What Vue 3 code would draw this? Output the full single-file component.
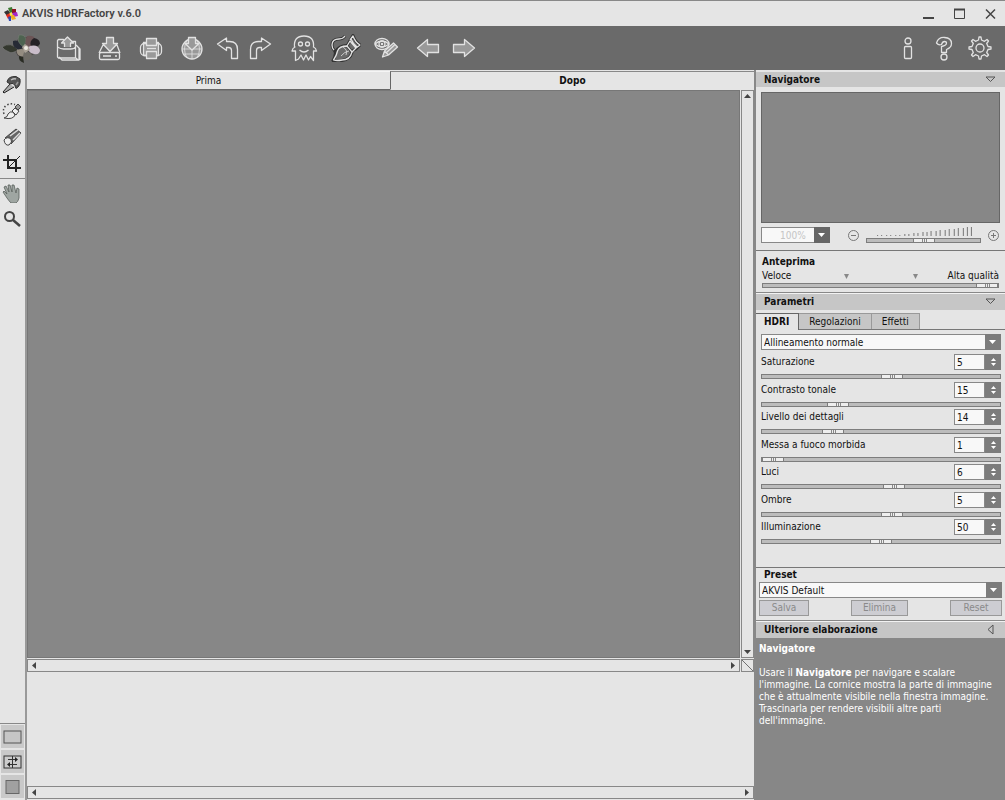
<script setup>
import { ref, reactive } from "vue";

const activeView = ref("Dopo");
const activeTab = ref("HDRI");
const zoom = ref("100%");
const zoomLevel = ref(50);
const quality = ref(100);
const alignment = ref("Allineamento normale");
const preset = ref("AKVIS Default");

const tabs = ["HDRI", "Regolazioni", "Effetti"];

const params = reactive([
  { id: "saturation", label: "Saturazione", value: 5, min: -50, max: 50 },
  { id: "contrast", label: "Contrasto tonale", value: 15, min: 0, max: 50 },
  { id: "details", label: "Livello dei dettagli", value: 14, min: 0, max: 50 },
  { id: "soft", label: "Messa a fuoco morbida", value: 1, min: 1, max: 20 },
  { id: "lights", label: "Luci", value: 6, min: -50, max: 50 },
  { id: "shadows", label: "Ombre", value: 5, min: -50, max: 50 },
  { id: "lighting", label: "Illuminazione", value: 50, min: 0, max: 100 },
]);

// growing marks above the zoom slider
const marks = Array.from({ length: 22 }, (_, i) => ({
  x: 1 + Math.round(i * 4.45),
  h: i < 5 ? 1 : Math.round(1 + (i - 4) * 0.48),
}));

function step(param, by) {
  const next = Number(param.value) + by;
  param.value = Math.min(param.max, Math.max(param.min, next));
}
</script>

<template>
  <div class="app">
    <header class="titlebar">
      <svg class="app-icon" width="14" height="14" viewBox="0 0 14 14">
        <path d="M0 5l4-2 3 4-4 2z" fill="#333" />
        <path d="M4 1l4-1 1 5-3 1z" fill="#3d7a32" />
        <path d="M8 2l4 0 0 4-4 1z" fill="#8c1420" />
        <path d="M8 6l5-1 1 4-5 1z" fill="#a326c9" />
        <path d="M2 8l4-2 1 4-3 2z" fill="#e52d20" />
        <path d="M6 8l4 0 2 4-4 1z" fill="#f0ae24" />
        <path d="M4 10l3-1 0 5-2 0z" fill="#304bb5" />
        <circle cx="7" cy="7" r="1.5" fill="#f6e94b" />
      </svg>
      <h1>AKVIS HDRFactory v.6.0</h1>
      <div class="window-buttons">
        <button aria-label="Riduci">
          <svg width="13" height="12"><path d="M1 10h11" stroke="#444" stroke-width="2" /></svg>
        </button>
        <button aria-label="Ingrandisci">
          <svg width="13" height="12"><path d="M1.500 1.500h10v9h-10z" fill="none" stroke="#444" /><path d="M1 1.500h11" stroke="#444" stroke-width="2" /></svg>
        </button>
        <button aria-label="Chiudi">
          <svg width="13" height="12"><path d="M2 1.500l9 9M11 1.500l-9 9" stroke="#444" stroke-width="1.500" /></svg>
        </button>
      </div>
    </header>

    <div class="toolbar">
      <svg class="logo" width="40" height="32" viewBox="0 0 40 32">
        <path d="M10 14l8-9 12 0 7 8-5 9-8 5-8-3z" fill="#4c4847" />
        <path d="M0 15q9-6 16 3q-6 4-9 2q-5-2-7-5z" fill="#34382f" stroke="#808080" stroke-width=".6" />
        <path d="M11 9q6-2 10 6l-3 3q-8-2-7-9z" fill="#262a35" />
        <path d="M17 3q7-1 7 6l-2 6q-8-4-5-12z" fill="#4e6350" stroke="#7b8478" stroke-width=".5" />
        <path d="M25 4q8-1 8 4q-2 7-8 8q-3-6 0-12z" fill="#6b5455" />
        <path d="M32 6q6 1 6 6q-4 5-9 2q-2-5 3-8z" fill="#252126" />
        <path d="M26 15q9-4 12 3q0 5-6 4q-6-1-6-7z" fill="#c9bcc9" />
        <path d="M15 18q7-3 9 2q-1 6-6 4q-4-2-3-6z" fill="#948c80" />
        <path d="M23 19q7 1 7 5q-2 5-7 4q-4-4 0-9z" fill="#6f6c66" />
        <path d="M17 24l4 1 1 6q-6-2-5-7z" fill="#292b23" />
        <path d="M20 15l3-3 3 2 2 4-5 3z" fill="#a9a196" />
        <circle cx="24" cy="16" r="2" fill="#eeeae1" />
      </svg>

      <div class="group">
        <button aria-label="Apri">
          <svg class="icon" viewBox="0 0 32 28">
            <path d="M23 11l3 3v12H9l-3-3M24 12l3 3v11M25 26l-2-2" />
            <path d="M4.500 14V6.500l1-1h5l1 2h11v16.500h-17l-1-1zM4.500 13q3 2 6 2h7q4 0 5-2" />
            <path class="fill" d="M11.500 13V9h-3l6-6 6 6h-3v4" />
          </svg>
        </button>
        <button aria-label="Salva">
          <svg class="icon" viewBox="0 0 32 28">
            <path d="M9 11l-4 8M23 11l3 8M9 11h3M20 11h3" />
            <rect x="5.500" y="18.500" width="20" height="7" rx="1.500" />
            <path class="fill" d="M12.500 3.500h7v6h4l-7.500 8-7.500-8h4z" />
            <path d="M9 22h8M21 22h2" />
          </svg>
        </button>
        <button aria-label="Stampa">
          <svg class="icon" viewBox="0 0 32 28">
            <rect class="fill" x="8.500" y="8.500" width="15" height="13" />
            <rect x="5.500" y="9.500" width="21" height="12" rx="4" />
            <rect class="fill" x="11.500" y="4.500" width="10" height="7" />
            <rect class="fill" x="11.500" y="17.500" width="10" height="7" />
            <path d="M12 14.500h9" />
          </svg>
        </button>
        <button aria-label="Pubblica">
          <svg class="icon" viewBox="0 0 32 28">
            <circle class="fill" cx="16" cy="15" r="10" />
            <path d="M6 15h20M8 20h16M16 5v20M11 6q-5 9 0 18M21 6q5 9 0 18" stroke-width=".8" />
            <path class="fill" d="M12.500 3.500h7v6h3.500l-7 6.500-7-6.500h3.500z" />
          </svg>
        </button>
        <button class="narrow" aria-label="Annulla">
          <svg class="icon" viewBox="0 0 32 28">
            <path d="M4.500 10l9-6v3.500h3q8 0 8 8v9h-6v-8q0-3-3-3h-2v3z" />
          </svg>
        </button>
        <button class="narrow" aria-label="Ripeti">
          <svg class="icon" viewBox="0 0 32 28">
            <path d="M24.500 10l-9-6v3.500h-3q-8 0-8 8v9h6v-8q0-3 3-3h2v3z" />
          </svg>
        </button>
      </div>

      <div class="group">
        <button aria-label="Fantasmi">
          <svg class="icon" viewBox="0 0 32 28">
            <path d="M6.500 13q-1-11 9.500-11t9.500 11q2.500 1 3 4h-3v9.500l-3-4-2 3.500-2.500-5-2.500 5-2.500-5-2.500 4-3 1.500V17h-3.500q.5-3 3-4z" />
            <circle cx="12.500" cy="10" r="2" />
            <circle cx="19.500" cy="10" r="2" />
            <path d="M11.500 16q4.500 4 9 0" />
          </svg>
        </button>
        <button aria-label="Pennello">
          <svg class="icon" viewBox="0 0 32 28">
            <g class="shade">
              <path d="M16 2q-2 3-6 3-7 0-7 6 0 3 2 5t1 5q0 3-2 5.500 4 1 9 0 8-1 10-8l-5-7q-8 0-11 6" />
              <path d="M18 12l4-7 2-3.500q2 6 7 9.500l-4 4-4 2" />
            </g>
            <path d="M16 2q-2 3-6 3-7 0-7 6 0 3 2 5" />
            <path d="M4.500 26q3-4 4-9 2-5 9.500-5l5 6q-2 8-10 8-5 1-8.500 0z" />
            <path d="M18 12l3-5 6 7-4 4M21 6l3-4q2 6 7 9l-4 3M22 5q2 5 6 8" />
            <path d="M14 13q5 3 3 8M20 17q-5 1-8 5" stroke-width=".8" />
          </svg>
        </button>
        <button aria-label="Modifica selezione">
          <svg class="icon" viewBox="0 0 32 28">
            <ellipse cx="12" cy="10" rx="7" ry="5.500" />
            <path d="M5 10q7-6 14 0-7 6-14 0z" />
            <circle cx="12" cy="10" r="3" />
            <circle cx="12" cy="10" r=".6" />
            <path class="fill" d="M12.500 23l2-6 9-8 4 4-9 8zM14.500 17l4 4M16.500 18.500l8-7.500" />
          </svg>
        </button>
      </div>

      <div class="group arrows">
        <button class="narrow" aria-label="Indietro">
          <svg class="icon" viewBox="0 0 32 28">
            <path class="fill" d="M5.500 14l10-8.500v5h11v8h-11v4z" />
          </svg>
        </button>
        <button class="narrow" aria-label="Avanti">
          <svg class="icon" viewBox="0 0 32 28">
            <path class="fill" d="M27.500 14l-10-8.500v5h-11v8h11v4z" />
          </svg>
        </button>
      </div>

      <div class="group help-group">
        <button aria-label="Informazioni">
          <svg class="icon" viewBox="0 0 32 28">
            <circle cx="16" cy="7" r="3" />
            <rect x="12.500" y="12.500" width="7" height="12" rx="1" />
          </svg>
        </button>
        <button aria-label="Aiuto">
          <svg class="icon" viewBox="0 0 32 28">
            <path d="M8.500 9q2-6 8-5.500 7 .5 7 6 0 4-5 6v3h-5v-6q5-1 5-3.500 0-1.500-2-1.500t-3 3q-3 1-5-1.500z" />
            <circle cx="16" cy="23" r="3" />
          </svg>
        </button>
        <button aria-label="Impostazioni">
          <svg class="icon" viewBox="0 0 32 28">
            <path d="M14.500 6l.5-3h2l.5 3 3 1.300L23 5.500 24.500 7l-1.800 2.500L24 12.500l3 .5v2l-3 .5-1.300 3 1.800 2.500-1.500 1.500-2.500-1.800-3 1.300-.5 3h-2l-.5-3-3-1.300L9 22.500 7.500 21l1.800-2.500-1.300-3-3-.5v-2l3-.5 1.300-3L7.500 7 9 5.500l2.500 1.800z" />
            <circle cx="16" cy="14" r="4" />
          </svg>
        </button>
      </div>
    </div>

    <div class="workspace">
      <aside class="tools">
        <button aria-label="Affina">
          <svg width="20" height="20" viewBox="0 0 20 20">
            <path d="M8 9l-7 8 1 1 10-6" fill="#aaa" stroke="#222" />
            <path d="M5 7q1-6 9-5.500l4 2.500q1 7-4 9.500-1-4-3-5-3 1.500-6-1.500z" fill="#555" stroke="#333" />
            <path d="M9 5q3-2 5-1" stroke="#bbb" stroke-width="1.500" fill="none" />
            <path d="M14 10l2-3" stroke="#999" stroke-width="1.500" />
          </svg>
        </button>
        <button aria-label="Selezione rapida">
          <svg width="20" height="20" viewBox="0 0 20 20" fill="none" stroke="#444">
            <path d="M2 13q-2-6 3-9 4-2 8-.5" stroke-width="1.500" stroke-dasharray="1.500 2" />
            <path d="M2 17q4-1 4-4 2-3 5-2l2 3q-2 5-11 3z" fill="#eee" />
            <path d="M10 10l3-3 4 3-3 4z" fill="#eee" />
            <path d="M13 6l3-3 3 3-3 3z" fill="#999" />
          </svg>
        </button>
        <button aria-label="Gomma">
          <svg width="20" height="20" viewBox="0 0 20 20" stroke="#444">
            <path d="M3 11L14 2l5 4L9 17z" fill="#666" />
            <path d="M8 9l8-6M11 13l7-7" stroke="#ddd" stroke-width="1.500" />
            <path d="M2 13q3-4 7-1 2 3-2 6-4 1-5-5z" fill="#eee" />
          </svg>
        </button>
        <button aria-label="Taglierina">
          <svg width="20" height="20" viewBox="0 0 20 20" fill="none" stroke="#222">
            <path d="M6 2v13h13M1 7h13v12" stroke-width="2" />
            <path d="M6 15L18 3" />
          </svg>
        </button>
        <hr />
        <button aria-label="Mano">
          <svg width="20" height="20" viewBox="0 0 20 20">
            <path d="M5 15L1 9l1-1 3 3-3-7 2-1 3 6-1-7h2l2 7 0-7 2 0 2 8 1-5 2 1v9q-1 4-3 5H9q-2-2-4-5z" fill="#9fa6a2" stroke="#59605c" stroke-width=".8" />
          </svg>
        </button>
        <button aria-label="Zoom">
          <svg width="20" height="20" viewBox="0 0 20 20" fill="none" stroke="#444">
            <circle cx="7.500" cy="7.500" r="4.500" stroke-width="2" />
            <path d="M11 11l7 6" stroke-width="2.500" />
          </svg>
        </button>

        <div class="screen-modes">
          <button aria-label="Vista singola">
            <svg width="19" height="14"><rect x="1" y="1" width="17" height="12" fill="#c6c6c6" stroke="#555" /></svg>
          </button>
          <button aria-label="Vista doppia">
            <svg width="19" height="14" fill="none" stroke="#333">
              <rect x="1" y="1" width="17" height="12" fill="#ccc" />
              <path d="M9.500 1v12M5 4.500h9M5 9.500h9" />
              <path d="M12 2l3 2.500-3 2.500zM7 7l-3 2.500 3 2.500z" fill="#222" stroke="none" />
            </svg>
          </button>
          <button aria-label="Colore di sfondo">
            <svg width="19" height="14"><rect x="3" y="0.500" width="13" height="13" fill="#a0a0a0" stroke="#666" /></svg>
          </button>
        </div>
      </aside>

      <main class="stage">
        <div class="view-tabs">
          <button :class="{ active: activeView === 'Prima' }" @click="activeView = 'Prima'">Prima</button>
          <button :class="{ active: activeView === 'Dopo' }" @click="activeView = 'Dopo'">Dopo</button>
        </div>
        <div class="canvas-area">
          <div class="canvas"></div>
          <div class="scroll vertical">
            <button aria-label="Su"><svg width="7" height="4"><path d="M0 4l3.500-4L7 4z" /></svg></button>
            <button aria-label="Giù"><svg width="7" height="4"><path d="M0 0h7L3.500 4z" /></svg></button>
          </div>
          <div class="scroll">
            <button aria-label="Sinistra"><svg width="4" height="7"><path d="M4 0v7L0 3.500z" /></svg></button>
            <button aria-label="Destra"><svg width="4" height="7"><path d="M0 0v7l4-3.500z" /></svg></button>
          </div>
          <svg class="corner" viewBox="0 0 12 12"><path d="M0 0l12 12" stroke="#666" /></svg>
        </div>
        <div class="strip"></div>
        <div class="scroll bottom-scroll">
          <button aria-label="Sinistra"><svg width="4" height="7"><path d="M4 0v7L0 3.500z" /></svg></button>
          <button aria-label="Destra"><svg width="4" height="7"><path d="M0 0v7l4-3.500z" /></svg></button>
        </div>
      </main>

      <aside class="panel">
        <h2>
          Navigatore
          <svg width="11" height="7"><path d="M1 1h9L5.500 5.500z" fill="none" stroke="#555" /></svg>
        </h2>
        <section class="navigator">
          <div class="preview"></div>
          <div class="zoom-row">
            <div class="select zoom-select">
              <select v-model="zoom" aria-label="Zoom" disabled>
                <option>100%</option>
              </select>
              <svg width="7" height="4"><path d="M0 0h7L3.500 4z" /></svg>
            </div>
            <button class="round" aria-label="Riduci zoom">
              <svg width="13" height="13" fill="none" stroke="#777"><circle cx="6.500" cy="6.500" r="5" /><path d="M4 6.500h5" /></svg>
            </button>
            <div class="zoom-slider">
              <svg width="100%" height="11" viewBox="0 0 114 11" preserveAspectRatio="none">
                <path v-for="m in marks" :key="m.x" :d="`M${m.x + 10.5} 9v-${m.h}`" stroke="#777" />
              </svg>
              <input v-model="zoomLevel" type="range" aria-label="Livello di zoom" />
            </div>
            <button class="round" aria-label="Aumenta zoom">
              <svg width="13" height="13" fill="none" stroke="#777"><circle cx="6.500" cy="6.500" r="5" /><path d="M4 6.500h5M6.500 4v5" /></svg>
            </button>
          </div>
        </section>

        <section class="quality">
          <h3><label for="quality">Anteprima</label></h3>
          <div class="quality-labels">
            <span>Veloce</span>
            <svg width="5" height="5"><path d="M0 0h5L2.500 5z" fill="#888" /></svg>
            <svg width="5" height="5"><path d="M0 0h5L2.500 5z" fill="#888" /></svg>
            <span>Alta qualità</span>
          </div>
          <input id="quality" v-model="quality" type="range" />
        </section>

        <h2 class="ruled">
          Parametri
          <svg width="11" height="7"><path d="M1 1h9L5.500 5.500z" fill="none" stroke="#555" /></svg>
        </h2>
        <div class="tabs">
          <button v-for="tab in tabs" :key="tab" :class="{ active: activeTab === tab }" @click="activeTab = tab">
            {{ tab }}
          </button>
        </div>
        <section class="settings">
          <div class="select">
            <select v-model="alignment" aria-label="Allineamento">
              <option>Allineamento normale</option>
            </select>
            <svg width="7" height="4"><path d="M0 0h7L3.500 4z" /></svg>
          </div>
          <div class="params">
            <div v-for="p in params" :key="p.id" class="param">
              <div class="param-head">
                <label :for="p.id">{{ p.label }}</label>
                <input :id="p.id" v-model="p.value" class="number" type="text" />
                <div class="spin">
                  <button :aria-label="`Aumenta ${p.label}`" @click="step(p, 1)">
                    <svg width="5" height="3"><path d="M0 3l2.500-3L5 3z" /></svg>
                  </button>
                  <button :aria-label="`Diminuisci ${p.label}`" @click="step(p, -1)">
                    <svg width="5" height="3"><path d="M0 0h5L2.500 3z" /></svg>
                  </button>
                </div>
              </div>
              <input v-model.number="p.value" type="range" :min="p.min" :max="p.max" :aria-label="p.label" />
            </div>
          </div>
        </section>

        <section class="preset">
          <h3><label for="preset">Preset</label></h3>
          <div class="select">
            <select id="preset" v-model="preset">
              <option>AKVIS Default</option>
            </select>
            <svg width="7" height="4"><path d="M0 0h7L3.500 4z" /></svg>
          </div>
          <div class="preset-buttons">
            <button disabled>Salva</button>
            <button class="delete" disabled>Elimina</button>
            <button class="reset" disabled>Reset</button>
          </div>
        </section>

        <h2 class="ruled">
          Ulteriore elaborazione
          <svg width="11" height="11"><path d="M8 1v9L3 5.500z" fill="none" stroke="#555" /></svg>
        </h2>
        <section class="hint">
          <h3>Navigatore</h3>
          <p>
            Usare il <b>Navigatore</b> per navigare e scalare l'immagine. La cornice mostra la parte di
            immagine che è attualmente visibile nella finestra immagine. Trascinarla per rendere visibili
            altre parti dell'immagine.
          </p>
        </section>
      </aside>
    </div>
  </div>
</template>

<style>
body {
  margin: 0;
}
</style>

<style scoped>
* {
  box-sizing: border-box;
}

.app {
  display: flex;
  flex-direction: column;
  min-height: 100vh;
  background: #e5e5e5;
  color: #111;
  font: 10px/14px "DejaVu Sans Condensed", "DejaVu Sans", sans-serif;
}

button,
select,
input {
  margin: 0;
  padding: 0;
  border: 0;
  border-radius: 0;
  background: none;
  color: inherit;
  font: inherit;
}

svg {
  display: block;
}

h1,
h2,
h3,
p {
  margin: 0;
  font-size: 10px;
}

h2,
h3,
b,
.active {
  font-weight: 700;
}

.titlebar {
  display: flex;
  align-items: center;
  height: 26px;
  padding: 0 8px 0 4px;
  border-top: 1px solid #888;
}

h1 {
  margin-left: 4px;
  color: #444;
  font: 600 11px/14px Roboto, "Noto Sans", sans-serif;
}

.window-buttons {
  display: flex;
  gap: 18px;
  margin-left: auto;
}

.toolbar {
  display: flex;
  align-items: center;
  height: 44px;
  padding: 0 7px 0 2px;
  background: #6a6a6a;
}

.logo {
  margin-right: 6px;
}

.group {
  display: flex;
  margin-right: 5px;
}

.group button {
  display: flex;
  justify-content: center;
  width: 41px;
}

.group .narrow {
  width: 33px;
}

.arrows {
  gap: 2px;
}

.help-group {
  margin: 0 0 0 auto;
}

.help-group button {
  width: 36px;
}

.icon {
  width: 32px;
  height: 28px;
  flex: none;
  fill: none;
  stroke: #e2e2e2;
  stroke-width: 1.3;
  stroke-linejoin: round;
}

.icon .fill {
  fill: #999;
}

.icon .shade {
  stroke: #333;
  stroke-width: 3;
}

.workspace {
  display: flex;
  flex: 1;
}

.tools {
  display: flex;
  flex-direction: column;
  width: 27px;
  padding-top: 2px;
  border-right: 2px solid #999;
}

.tools > button {
  display: grid;
  place-items: center;
  width: 24px;
  height: 26px;
}

hr {
  width: 100%;
  margin: 2px 0 1px;
  border: 0;
  border-top: 1px solid #888;
}

.screen-modes {
  display: grid;
  gap: 2px;
  margin-top: auto;
  padding: 1px 1px 2px;
  border-top: 1px solid #888;
}

.screen-modes button {
  display: grid;
  place-items: center;
  width: 23px;
  height: 23px;
  background: #c9c9c9;
}

.stage {
  display: flex;
  flex: 1;
  flex-direction: column;
  min-width: 0;
  padding-bottom: 1px;
}

.view-tabs {
  display: flex;
  height: 20px;
  padding-top: 1px;
}

.view-tabs button {
  flex: 1;
  border-top: 1px solid #f5f5f5;
  border-bottom: 1px solid #666;
}

.view-tabs .active {
  border-top-color: #888;
  border-bottom-color: #e5e5e5;
  border-left: 1px solid #666;
}

.canvas-area {
  display: grid;
  flex: 1;
  grid-template: 1fr 13px / 1fr 13px;
  gap: 1px;
}

.canvas {
  background: #878787;
  border: 1px solid #777;
}

.scroll {
  display: flex;
  align-items: center;
  justify-content: space-between;
  height: 13px;
  padding: 0 4px;
  border: 1px solid #888;
  fill: #444;
}

.vertical {
  flex-direction: column;
  height: auto;
  padding: 3px 0;
}

.corner {
  width: 13px;
  height: 13px;
  border: 1px solid #888;
}

.strip {
  height: 114px;
}

.panel {
  display: flex;
  flex-direction: column;
  width: 251px;
  padding-top: 2px;
  border-left: 2px solid #888;
}

h2 {
  display: flex;
  align-items: center;
  justify-content: space-between;
  height: 15px;
  padding: 0 9px 0 8px;
  background: #c6c6c6;
  color: #111;
}

h3 {
  color: #111;
}

.ruled {
  height: 18px;
  border-top: 1px solid #888;
  box-shadow: inset 0 1px #f2f2f2;
}

.navigator {
  height: 163px;
  padding: 5px 5px 0;
}

.preview {
  height: 131px;
  border: 1px solid #666;
  background: #878787;
}

.zoom-row {
  display: flex;
  align-items: center;
  margin-top: 4px;
}

.select {
  position: relative;
}

.select select {
  display: block;
  width: 100%;
  height: 16px;
  padding: 1px 0 0 2px;
  border: 1px solid #888;
  background: #f8f8f8;
  appearance: none;
}

.select svg {
  position: absolute;
  top: 0;
  right: 0;
  width: 16px;
  height: 16px;
  padding: 6px 4px;
  background: #7c7c7c;
  fill: #fff;
  pointer-events: none;
}

.zoom-select {
  width: 69px;
}

.zoom-select select {
  padding-left: 18px;
  color: #c4c4c4;
  opacity: 1;
}

.zoom-select svg {
  background: #666;
}

.round {
  margin-left: 17px;
}

.zoom-slider {
  flex: 1;
  margin-left: 6px;
}

.zoom-slider + .round {
  margin-left: 6px;
}

input[type="range"] {
  display: block;
  width: 100%;
  height: 5px;
  border: 1px solid #7d7d7d;
  background: #bcbcbc;
  appearance: none;
}

input[type="range"]::-webkit-slider-thumb {
  width: 22px;
  height: 5px;
  border: 1px solid #7d7d7d;
  background: linear-gradient(90deg, #eee 8px, #888 8px 9px, #eee 9px 10px, #888 10px 11px, #eee 11px 12px, #888 12px 13px, #eee 13px);
  appearance: none;
}

.quality {
  height: 42px;
  padding: 4px 6px 0;
  border-top: 1px solid #777;
}

.quality-labels {
  display: grid;
  grid-template-columns: 1fr 5px 64px 5px 1fr;
  align-items: center;
}

.quality-labels svg:nth-child(3) {
  grid-column: 4;
}

.quality-labels span:last-child {
  text-align: right;
}

.tabs {
  display: flex;
  height: 20px;
  padding-top: 3px;
  border-bottom: 1px solid #777;
}

.tabs button {
  height: 16px;
  padding: 0 10px;
  border: 1px solid #999;
  border-width: 1px 1px 0 0;
  background: #c6c6c6;
}

.tabs .active {
  height: 17px;
  padding: 0 9px 0 8px;
  border-color: #666;
  background: #e5e5e5;
  color: #111;
}

.settings {
  height: 237px;
  padding: 4px 4px 0 5px;
}

.params {
  display: flex;
  flex-direction: column;
  justify-content: space-between;
  height: 191px;
  margin-top: 4px;
}

.param {
  height: 26px;
}

.param-head {
  display: flex;
  align-items: center;
  height: 16px;
  margin-bottom: 4px;
}

.param-head label {
  flex: 1;
  line-height: 16px;
}

.number {
  width: 31px;
  height: 16px;
  padding: 1px 0 0 2px;
  border: 1px solid #888;
  background: #f8f8f8;
}

.spin {
  display: grid;
  gap: 2px;
  align-content: center;
  width: 16px;
  height: 16px;
  background: #7c7c7c;
  fill: #fff;
}

.spin button {
  display: grid;
  place-items: center;
}

.preset {
  height: 53px;
  padding: 0 3px;
  border-top: 1px solid #777;
}

.preset h3 {
  padding-left: 5px;
}

.preset-buttons {
  display: flex;
  justify-content: space-between;
  margin-top: 2px;
}

.preset-buttons button {
  width: 50px;
  height: 16px;
  border: 1px solid #999;
  background: #cdcdd2;
  color: #8a8a8a;
  line-height: 14px;
}

.preset-buttons .delete {
  width: 57px;
}

.preset-buttons .reset {
  width: 52px;
}

.hint {
  flex: 1;
  padding: 5px 6px 0 3px;
  background: #878787;
  color: #fff;
  line-height: 12px;
}

.hint h3 {
  margin-bottom: 12px;
  color: #fff;
}
</style>
